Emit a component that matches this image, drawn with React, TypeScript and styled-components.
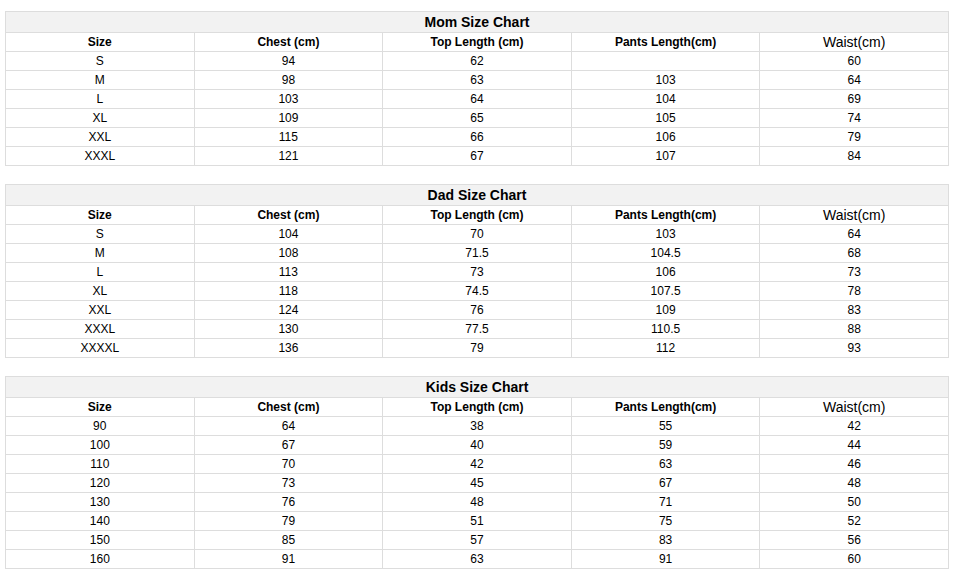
import styled, { createGlobalStyle } from "styled-components";

const GlobalStyle = createGlobalStyle`
  body {
    margin: 0;
    background: #fff;
    font-family: "Liberation Sans", Arial, sans-serif;
    color: #000;
  }
`;

const Page = styled.div`
  padding: 11px 5px 0 5px;
  display: flex;
  flex-direction: column;
  gap: 18px;
`;

const Table = styled.table`
  width: 944px;
  border-collapse: collapse;
  table-layout: fixed;
`;

const TitleCell = styled.th`
  background: #f2f2f2;
  border: 1px solid #dddddd;
  height: 20px;
  padding: 0;
  font-size: 14px;
  font-weight: bold;
  text-align: center;
`;

const Cell = styled.td<{ head?: boolean; plain?: boolean }>`
  border: 1px solid #dddddd;
  height: 18px;
  padding: 0;
  text-align: center;
  font-size: ${({ plain }) => (plain ? "14px" : "12px")};
  font-weight: ${({ head, plain }) => (head && !plain ? "bold" : "normal")};
  line-height: 18px;
`;

type Chart = { title: string; rows: string[][] };

const headers = ["Size", "Chest (cm)", "Top Length (cm)", "Pants Length(cm)", "Waist(cm)"];

const charts: Chart[] = [
  {
    title: "Mom Size Chart",
    rows: [
      ["S", "94", "62", "", "60"],
      ["M", "98", "63", "103", "64"],
      ["L", "103", "64", "104", "69"],
      ["XL", "109", "65", "105", "74"],
      ["XXL", "115", "66", "106", "79"],
      ["XXXL", "121", "67", "107", "84"],
    ],
  },
  {
    title: "Dad Size Chart",
    rows: [
      ["S", "104", "70", "103", "64"],
      ["M", "108", "71.5", "104.5", "68"],
      ["L", "113", "73", "106", "73"],
      ["XL", "118", "74.5", "107.5", "78"],
      ["XXL", "124", "76", "109", "83"],
      ["XXXL", "130", "77.5", "110.5", "88"],
      ["XXXXL", "136", "79", "112", "93"],
    ],
  },
  {
    title: "Kids Size Chart",
    rows: [
      ["90", "64", "38", "55", "42"],
      ["100", "67", "40", "59", "44"],
      ["110", "70", "42", "63", "46"],
      ["120", "73", "45", "67", "48"],
      ["130", "76", "48", "71", "50"],
      ["140", "79", "51", "75", "52"],
      ["150", "85", "57", "83", "56"],
      ["160", "91", "63", "91", "60"],
    ],
  },
];

function SizeChart({ chart }: { chart: Chart }) {
  return (
    <Table>
      <thead>
        <tr>
          <TitleCell colSpan={5}>{chart.title}</TitleCell>
        </tr>
        <tr>
          {headers.map((h, i) => (
            <Cell key={h} head plain={i === 4}>
              {h}
            </Cell>
          ))}
        </tr>
      </thead>
      <tbody>
        {chart.rows.map((row, r) => (
          <tr key={r}>
            {row.map((v, c) => (
              <Cell key={c}>{v}</Cell>
            ))}
          </tr>
        ))}
      </tbody>
    </Table>
  );
}

export default function App() {
  return (
    <>
      <GlobalStyle />
      <Page>
        {charts.map((c) => (
          <SizeChart key={c.title} chart={c} />
        ))}
      </Page>
    </>
  );
}
